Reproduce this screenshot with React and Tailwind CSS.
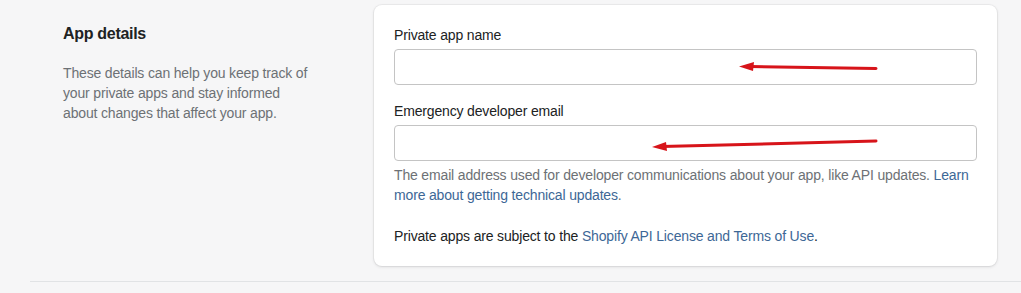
export default function App() {
  return (
    <div className="min-h-[293px] bg-[#f6f6f7] font-['Segoe_UI','Liberation_Sans',sans-serif] text-[14px] leading-[20px] tracking-[-0.16px] text-[#202223]">
      <div className="pl-[30px]">
        <div className="flex border-b border-[#e1e3e5] pb-[15px] pt-[5px]">
          {/* Left description */}
          <div className="w-[344px] shrink-0 pl-[33px] pt-[17px]">
            <h2 className="text-[16px] font-semibold leading-[24px] tracking-[-0.3px] text-[#202223]">App details</h2>
            <p className="mt-[17px] w-[250px] text-[#6d7175]">
              These details can help you keep track of your private apps and stay informed about changes that affect your app.
            </p>
          </div>

          {/* Card */}
          <div className="relative w-[623px] rounded-[8px] bg-white p-[20px] shadow-[0_0_0_1px_rgba(63,63,68,0.05),0_1px_3px_0_rgba(63,63,68,0.15)]">
            <label className="block">Private app name</label>
            <input className="mt-[4px] block h-[36px] w-full rounded-[4px] border border-[#c4c4c4] bg-white px-3 outline-none" />

            <label className="mt-[16px] block">Emergency developer email</label>
            <input className="mt-[4px] block h-[36px] w-full rounded-[4px] border border-[#c4c4c4] bg-white px-3 outline-none" />
            <p className="mt-[4px] text-[#6d7175]">
              The email address used for developer communications about your app, like API updates.{' '}
              <a className="text-[#3d6796]">Learn more about getting technical updates</a>.
            </p>

            <p className="mt-[21px]">
              Private apps are subject to the{' '}
              <a className="text-[#3d6796]">Shopify API License and Terms of Use</a>.
            </p>

            {/* Annotation arrows */}
            <svg className="pointer-events-none absolute left-0 top-0" width="623" height="260" viewBox="0 0 623 260">
              <g transform="translate(-374 -5)">
                <line x1="876" y1="68.5" x2="750" y2="66.5" stroke="#d7141a" strokeWidth="3" strokeLinecap="round" />
                <polygon points="739,66.5 754,62 753,71" fill="#d7141a" />
                <line x1="876" y1="141" x2="662" y2="146.5" stroke="#d7141a" strokeWidth="3" strokeLinecap="round" />
                <polygon points="652,147 666,142 667,151" fill="#d7141a" />
              </g>
            </svg>
          </div>
        </div>
      </div>
    </div>
  );
}
